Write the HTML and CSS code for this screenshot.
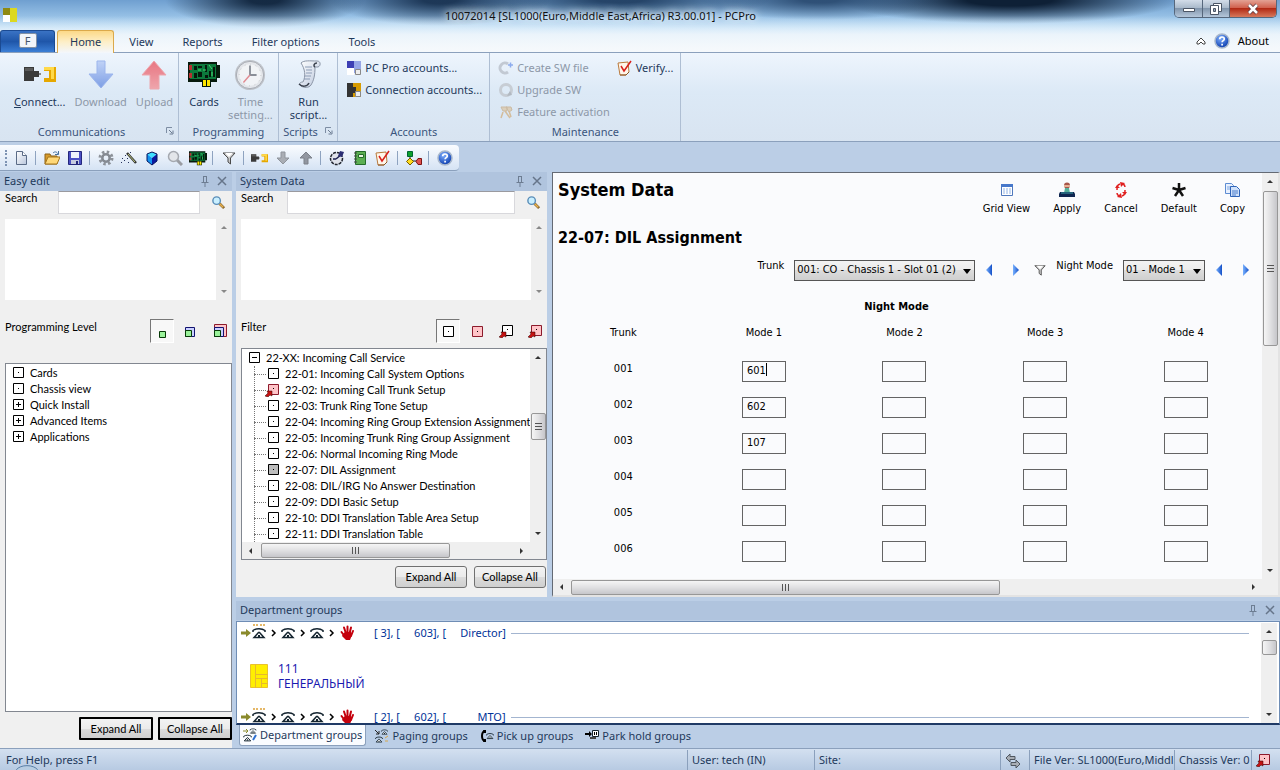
FILE: index.html
```
<!DOCTYPE html>
<html lang="en">
<head>
  <meta charset="UTF-8">
  <meta name="viewport" content="width=device-width, initial-scale=1.0">
  <title>10072014 [SL1000(Euro,Middle East,Africa) R3.00.01] - PCPro</title>
  <link rel="stylesheet" href="styles.css">
</head>
<body>

  <!-- shared icons -->
  <svg class="defs" aria-hidden="true">
    <linearGradient id="gBlue" x1="0" y1="0" x2="0" y2="1"><stop offset="0" stop-color="#b9cdf6"/><stop offset="1" stop-color="#6d92e2"/></linearGradient>
    <linearGradient id="gRed" x1="0" y1="0" x2="0" y2="1"><stop offset="0" stop-color="#e8606c"/><stop offset="1" stop-color="#f29aa0"/></linearGradient>
    <linearGradient id="gNav" x1="0" y1="0" x2="1" y2="0"><stop offset="0" stop-color="#79b2ff"/><stop offset="1" stop-color="#1450c8"/></linearGradient>
    <linearGradient id="gPaper" x1="0" y1="0" x2="1" y2="1"><stop offset="0" stop-color="#ffffff"/><stop offset="1" stop-color="#b9c6dc"/></linearGradient>
    <radialGradient id="gHelp" cx="0.4" cy="0.3" r="0.7"><stop offset="0" stop-color="#7fb0ff"/><stop offset="1" stop-color="#0b3cae"/></radialGradient>
    <symbol id="plug" viewBox="0 0 32 16">
      <path d="M0 1h10v4h5v6h-5v4H0z" fill="#3a3a3a"/><path d="M1 2h8v3H1z" fill="#5a5a5a"/><path d="M15 7h2v2h-2z" fill="#888"/>
      <path d="M20 1h12v15H20v-4h5V5h-5z" fill="#e6a800"/><path d="M20 1h10v3H20zM27 4h3v9h-3z" fill="#ffd94a"/>
    </symbol>
    <symbol id="board" viewBox="0 0 32 28">
      <path d="M0 2h29v3h3v13h-3v4h-6v5h-9v-5H0z" fill="#061a0c"/>
      <path d="M2 4h26v15H2z" fill="#0c7a3c"/>
      <path d="M1 5h3v5H1zM1 13h3v5H1z" fill="#b83232"/>
      <path d="M6 6h3v4H6zM10 6h4v2h-4zM10 12h4v5h-4zM6 13h3v5H6zM17 5h2v7h-2zM17 15h3v3h-3zM25 7h2v10h-2zM21 11h2v6h-2z" fill="#04190b"/>
      <path d="M21 5l3 4M15 10h3M24 12v4M10 10h3" stroke="#43d870" stroke-width="1"/>
      <path d="M15 20h3v6h-3zM19 20h3v6h-3z" fill="#ffe600"/>
    </symbol>
    <symbol id="verify" viewBox="0 0 16 16">
      <path d="M1 3l10-1 1 10-3 3H3z" fill="#fff6ea" stroke="#b9793c"/>
      <path d="M3 15h6l3-3" fill="none" stroke="#8a5524"/>
      <path d="M4 6l3 5 7-10" fill="none" stroke="#d8201c" stroke-width="1.5"/>
    </symbol>
    <symbol id="help" viewBox="0 0 16 16">
      <circle cx="8" cy="8" r="7" fill="url(#gHelp)" stroke="#a9b8cc" stroke-width="1.5"/>
      <path d="M5.700 6.300c0-3 4.600-3 4.600-.3 0 1.700-2.200 1.600-2.200 3.200M8.100 10.800v1.700" fill="none" stroke="#fff" stroke-width="1.700"/>
    </symbol>
    <symbol id="funnel" viewBox="0 0 14 14">
      <path d="M1 2h12L8.500 7v6L6 11V7z" fill="#c9c9c9" stroke="#4a4a4a"/><path d="M3 2h8L7 6z" fill="#fff"/>
    </symbol>
    <symbol id="lens" viewBox="0 0 16 16">
      <path d="M9 9l5 5" stroke="#8b6a35" stroke-width="3"/><path d="M9 9l4 4" stroke="#e9b24b" stroke-width="1.500"/>
      <circle cx="6" cy="6" r="4" fill="#c9efff" stroke="#5a8db8" stroke-width="1.500"/>
    </symbol>
    <symbol id="pin" viewBox="0 0 10 12"><path d="M3 1.500h4M3.500 1v6M6.500 1v6M1.500 7.500h7M5 8v4" fill="none" stroke="#6d7d92"/></symbol>
    <symbol id="cross" viewBox="0 0 10 10"><path d="M1 1l8 8M9 1l-8 8" stroke="#66758a" stroke-width="1.500"/></symbol>
    <symbol id="launcher" viewBox="0 0 8 8"><path d="M.5 6V.5H6" fill="none" stroke="#7d8da3"/><path d="M3 3l3 3M7 3.500V7H3.500" fill="none" stroke="#6b7b91"/></symbol>
    <symbol id="box" viewBox="0 0 12 12"><path d="M1.500 1.500h10v10h-10z" fill="#fff" stroke="#000"/><path d="M6 6h1v1H6z"/></symbol>
    <symbol id="boxplus" viewBox="0 0 12 12"><path d="M1.500 1.500h10v10h-10z" fill="#fff" stroke="#000"/><path d="M4 6.500h5M6.500 4v5" stroke="#000"/></symbol>
    <symbol id="boxminus" viewBox="0 0 12 12"><path d="M1.500 1.500h10v10h-10z" fill="#fff" stroke="#000"/><path d="M4 6.500h5" stroke="#000"/></symbol>
    <symbol id="boxgray" viewBox="0 0 12 12"><path d="M1.500 1.500h10v10h-10z" fill="#bdbdbd" stroke="#000"/><path d="M6 6h1v1H6z"/></symbol>
    <symbol id="boxpink" viewBox="0 0 12 12"><path d="M1.500 1.500h10v10h-10z" fill="#ffc4c8" stroke="#8c1a2b"/><path d="M6 6h1v1H6z"/></symbol>
    <symbol id="boxlink" viewBox="0 0 14 14"><path d="M3.500 1.500h10v10h-10z" fill="#fff" stroke="#000"/><path d="M8 5h1v1H8z"/><path d="M2 8h5v5l-2-1-2 2-3-1 3-3z" fill="#c41212" stroke="#300" stroke-width=".5"/></symbol>
    <symbol id="boxpinklink" viewBox="0 0 14 14"><path d="M3.500 1.500h10v10h-10z" fill="#ffc4c8" stroke="#8c1a2b"/><path d="M8 5h1v1H8z"/><path d="M2 8h5v5l-2-1-2 2-3-1 3-3z" fill="#c41212" stroke="#300" stroke-width=".5"/></symbol>
    <symbol id="phone" viewBox="0 0 14 12">
      <path d="M1 5V3.500c3-2.500 9-2.500 12 0V5" fill="none" stroke="#14242f" stroke-width="1.500"/>
      <path d="M6.500 5.500h1l4.500 5H2z" fill="#fff" stroke="#14242f" stroke-width="1.500"/><path d="M6 8h2v2H6z" fill="#14242f"/>
    </symbol>
    <symbol id="next" viewBox="0 0 7 8"><path d="M2 1l3 3-3 3" fill="none" stroke="#000" stroke-width="1.500"/></symbol>
    <symbol id="into" viewBox="0 0 10 8"><path d="M0 2.500h5V0l5 4-5 4V5.500H0z" fill="#8a8a2c"/></symbol>
    <symbol id="hand" viewBox="0 0 16 16">
      <path d="M2.500 7l3 4M5 2.500l2 6M8.500 1.500v7M12 2.500l-1.500 6M14 6l-2 5" stroke="#c4000c" stroke-width="2" stroke-linecap="round"/><path d="M4 9l2-2h6l1 3-2 5H7l-4-4z" fill="#c4000c"/>
    </symbol>
    <symbol id="prev-arrow" viewBox="0 0 8 12"><path d="M7 0v12L1 6z" fill="url(#gNav)"/></symbol>
    <symbol id="next-arrow" viewBox="0 0 8 12"><path d="M1 0v12l6-6z" fill="url(#gNav)"/></symbol>
  </svg>

  <header class="header">
    <div class="titlebar">
      <svg class="app-icon" viewBox="0 0 14 14"><path d="M0 0h7v7H0z" fill="#8f8a12"/><path d="M7 0h7v14H7z" fill="#dcd820"/><path d="M0 7h7v7H0z" fill="#fff"/></svg>
      <h1 class="app-title">10072014 [SL1000(Euro,Middle East,Africa) R3.00.01] - PCPro</h1>
      <div class="window-buttons">
        <button class="win-btn" aria-label="Minimize"><svg width="14" height="12" viewBox="0 0 14 12"><path d="M1.500 5.500h11v3h-11z" fill="#fff" stroke="#4b5565"/></svg></button>
        <button class="win-btn win-restore" aria-label="Restore"><svg width="12" height="12" viewBox="0 0 12 12"><path d="M3.500.5h8v8h-8z" fill="#fff" stroke="#4b5565"/><path d="M.5 2.500h8v9h-8z" fill="#fff" stroke="#4b5565"/><path d="M3.500 5.500h2v3h-2z" fill="#9aa8ba" stroke="#4b5565"/></svg></button>
        <button class="win-btn win-close" aria-label="Close"><svg width="12" height="12" viewBox="0 0 12 12"><path d="M2 2l8 8M10 2l-8 8" stroke="#5b3a42" stroke-width="4"/><path d="M2 2l8 8M10 2l-8 8" stroke="#fff" stroke-width="2.500"/></svg></button>
      </div>
    </div>
    <nav class="tabs">
      <button class="file-tab"><span class="file-key">F</span></button>
      <button class="tab active">Home</button>
      <button class="tab">View</button>
      <button class="tab">Reports</button>
      <button class="tab">Filter options</button>
      <button class="tab">Tools</button>
      <div class="tabs-right">
        <button class="plain" aria-label="Minimize ribbon"><svg width="10" height="8" viewBox="0 0 10 8"><path d="M1 5l4-4 4 4v2H7L5 5 3 7H1z" fill="#fff" stroke="#444"/></svg></button>
        <svg width="16" height="16"><use href="#help"/></svg>
        <button class="plain about">About</button>
      </div>
    </nav>
  </header>

  <section class="ribbon">
    <div class="group">
      <div class="group-body communications">
        <button class="big"><svg width="32" height="32"><use href="#plug" y="0" width="32" height="30"/></svg><span><u>C</u>onnect...</span></button>
        <button class="big off"><svg width="32" height="32" viewBox="0 0 32 32"><path d="M12 2h8v13h8L16 29 4 15h8z" fill="url(#gBlue)" stroke="#8fabeb"/></svg><span>Download</span></button>
        <button class="big off"><svg width="32" height="32" viewBox="0 0 32 32"><path d="M12 30h9V16h7L16 2 4 16h8z" fill="url(#gRed)" stroke="#ef9aa0"/></svg><span>Upload</span></button>
      </div>
      <div class="group-name">Communications<svg class="launcher"><use href="#launcher"/></svg></div>
    </div>
    <div class="group">
      <div class="group-body programming">
        <button class="big"><svg width="32" height="32" viewBox="0 0 32 32"><use href="#board" width="32" height="30"/></svg><span>Cards</span></button>
        <button class="big off"><svg width="34" height="34" viewBox="0 0 34 34"><circle cx="17" cy="17" r="16" fill="#b9bcc2"/><circle cx="17" cy="17" r="14.500" fill="#e4e5e8" stroke="#9b9ea5"/><circle cx="17" cy="17" r="11.500" fill="#f4f5f6" stroke="#bbb" stroke-dasharray="1 5"/><path d="M17 7v10h7" fill="none" stroke="#7b7f88" stroke-width="2"/><path d="M17 17l-7 8" stroke="#e07a80" stroke-width="1.500"/></svg><span>Time<br>setting...</span></button>
      </div>
      <div class="group-name">Programming</div>
    </div>
    <div class="group">
      <div class="group-body scripts">
        <button class="big"><svg width="32" height="32" viewBox="0 0 32 32"><path d="M8 4c3-3 9-2 16-2 4 0 4 5 1 6h-3c0 8-1 13-4 18-2 3-7 3-10 1-3-3 0-4 2-4 3-6 2-13-2-19z" fill="url(#gPaper)" stroke="#8b95a6"/><path d="M22 8c-2-1-1-4 2-4M6 25c3 3 8 3 10-1" fill="none" stroke="#39404c" stroke-width="1.500"/><path d="M12 8h7M13 11h6M13 14h6M12 17h6M11 20h6" stroke="#8d9db6"/></svg><span>Run<br>script...</span></button>
      </div>
      <div class="group-name">Scripts<svg class="launcher"><use href="#launcher"/></svg></div>
    </div>
    <div class="group">
      <div class="group-body list">
        <button class="row-btn"><svg width="16" height="16" viewBox="0 0 16 16"><path d="M1 1h7v7H1z" fill="#3d3fb4"/><path d="M8 1h7v12H8z" fill="#96a6e6"/><path d="M1 8h7v7H1z" fill="#fff"/><path d="M9.500 9.500h5v5h-5z" fill="#eee" stroke="#888"/></svg>PC Pro accounts...</button>
        <button class="row-btn"><svg width="16" height="16" viewBox="0 0 16 16"><path d="M1 1h14v14H1z" fill="#d79b00"/><path d="M1 1h6v4h3v6H7v4H1z" fill="#333"/><path d="M9.500 9.500h5v5h-5z" fill="#eee" stroke="#888"/></svg>Connection accounts...</button>
      </div>
      <div class="group-name">Accounts</div>
    </div>
    <div class="group">
      <div class="group-body list">
        <button class="row-btn off"><svg width="16" height="16" viewBox="0 0 16 16"><path d="M10 12a5 5 0 1 1 0-8" fill="none" stroke="#bcc3cd" stroke-width="3"/><path d="M10 5h5M12.500 2.500v5" stroke="#7ea0ec" stroke-width="1.500"/></svg>Create SW file</button>
        <button class="row-btn off"><svg width="16" height="16" viewBox="0 0 16 16"><circle cx="8" cy="8" r="5.500" fill="none" stroke="#c3c8cf" stroke-width="3"/><path d="M9 14l5-1-2-4z" fill="#aab0b8"/></svg>Upgrade SW</button>
        <button class="row-btn off"><svg width="16" height="16" viewBox="0 0 16 16"><path d="M3 3h6v4H5zM8 3h5l1 3-3 2z" fill="#dccbb2" stroke="#c9b496"/><path d="M7 7l5 7M5 8l-2 6M11 7l2 6" stroke="#d3b68d" stroke-width="1.500"/></svg>Feature activation</button>
        <button class="row-btn"><svg width="16" height="16"><use href="#verify"/></svg>Verify...</button>
      </div>
      <div class="group-name">Maintenance</div>
    </div>
  </section>

  <div class="toolbar-row">
    <div class="toolbar">
      <i class="grip"></i>
      <button class="tool" aria-label="New"><svg width="16" height="16" viewBox="0 0 16 16"><path d="M3.500 1.500h6l4 4v9h-10z" fill="url(#gPaper)" stroke="#5a6b86"/><path d="M9.500 1.500v4h4" fill="#fff" stroke="#5a6b86"/></svg></button>
      <i class="sep"></i>
      <button class="tool" aria-label="Open"><svg width="16" height="16" viewBox="0 0 16 16"><path d="M1 14V4h5l1 2h6v8z" fill="#d79a2b" stroke="#8c6114"/><path d="M1 14l3-7h12l-3 7z" fill="#ffd878" stroke="#a5761c"/><path d="M9 3c2-2 4-1 5 1M14.500 1v3.500H11" fill="none" stroke="#47729f"/></svg></button>
      <button class="tool" aria-label="Save"><svg width="16" height="16" viewBox="0 0 16 16"><path d="M1.500 1.500h13v13h-13z" fill="#4a4fc4" stroke="#24277c"/><path d="M4 2h8v6H4z" fill="#eef2fb"/><path d="M4 10h8v4H4z" fill="#c6cce0"/><path d="M9 11h2v3H9z" fill="#24277c"/></svg></button>
      <i class="sep"></i>
      <button class="tool" aria-label="Settings"><svg width="16" height="16" viewBox="0 0 16 16"><circle cx="8" cy="8" r="6" fill="none" stroke="#8d9299" stroke-width="3" stroke-dasharray="2.400 2.312"/><circle cx="8" cy="8" r="3.700" fill="none" stroke="#858a92" stroke-width="2.500"/></svg></button>
      <button class="tool" aria-label="Wizard"><svg width="16" height="16" viewBox="0 0 16 16"><path d="M6 3l9 10" stroke="#333" stroke-width="2.500"/><path d="M7 4l7 8" stroke="#b9c37a"/><path d="M4 5h1v1H4zM1 8h1v1H1zM6 8h1v1H6zM3 10h1v1H3zM7 12h1v1H7zM0 12h1v1H0zM9 2h1v1H9z" fill="#26335e"/></svg></button>
      <button class="tool" aria-label="Chassis"><svg width="16" height="16" viewBox="0 0 16 16"><path d="M8 2l5 2-5 4-5-4z" fill="#3fe0ff"/><path d="M3 4l5 4v7l-5-4z" fill="#1393f0"/><path d="M13 4L8 8v7l5-4z" fill="#0a18a0"/><path d="M8 2l5 2v7l-5 4-5-4V4z" fill="none" stroke="#04125e"/></svg></button>
      <button class="tool" aria-label="Find"><svg width="16" height="16" viewBox="0 0 16 16"><path d="M10 10l5 5" stroke="#9a9da3" stroke-width="3"/><circle cx="6.500" cy="6.500" r="5" fill="#e3e6ea" stroke="#a5a9b0" stroke-width="1.500"/></svg></button>
      <button class="tool" aria-label="Cards"><svg width="18" height="16"><use href="#board"/></svg></button>
      <i class="sep"></i>
      <button class="tool" aria-label="Filter"><svg width="14" height="14"><use href="#funnel"/></svg></button>
      <i class="sep"></i>
      <button class="tool" aria-label="Connect"><svg width="17" height="10"><use href="#plug"/></svg></button>
      <button class="tool" aria-label="Download"><svg width="14" height="14" viewBox="0 0 14 14"><path d="M5 1h4v6h4l-6 6-6-6h4z" fill="#a9adb4" stroke="#8f949c"/></svg></button>
      <button class="tool" aria-label="Upload"><svg width="14" height="14" viewBox="0 0 14 14"><path d="M5 13h4V7h4L7 1 1 7h4z" fill="#9196a0" stroke="#7c818a"/></svg></button>
      <i class="sep"></i>
      <button class="tool" aria-label="Time setting"><svg width="16" height="16" viewBox="0 0 16 16"><circle cx="7.500" cy="8.500" r="6" fill="#dfe2ea" stroke="#20242e" stroke-width="1.500" stroke-dasharray="3 1"/><path d="M7 9l6-5M7 9H4" stroke="#191d4e" stroke-width="1.500"/><path d="M9 6l2-5 4 1-2 5z" fill="#2c2f74"/></svg></button>
      <button class="tool" aria-label="Notes"><svg width="16" height="16" viewBox="0 0 16 16"><path d="M3.500 1.500h10v13h-10z" fill="#5caf52" stroke="#256b2a"/><path d="M6.500 4.500h5v3h-5z" fill="#e7f6df" stroke="#256b2a"/><path d="M2 3h3M2 6h3M2 9h3M2 12h3" stroke="#444"/></svg></button>
      <button class="tool" aria-label="Verify"><svg width="16" height="16"><use href="#verify"/></svg></button>
      <i class="sep"></i>
      <button class="tool" aria-label="Flow"><svg width="16" height="16" viewBox="0 0 16 16"><path d="M4 6v5h8" fill="none" stroke="#222"/><path d="M1.500 1.500h5v5h-5z" fill="#0fa12c" stroke="#063"/><path d="M4 8l3.500 3.500L4 15 .5 11.500z" fill="#ffdc1e" stroke="#765c00"/><path d="M10 11.500l2-3h3.500v6H12z" fill="#e2514d" stroke="#7b1413"/></svg></button>
      <i class="sep"></i>
      <button class="tool" aria-label="Help"><svg width="16" height="16"><use href="#help"/></svg></button>
    </div>
  </div>

  <main class="workspace">
    <section class="dock easy-edit">
      <div class="dock-title">Easy edit<span class="dock-icons"><svg width="10" height="12"><use href="#pin"/></svg><svg width="10" height="10"><use href="#cross"/></svg></span></div>
      <div class="dock-body">
        <div class="search">
          <label for="easySearch">Search</label>
          <input type="text" id="easySearch">
          <button class="plain" aria-label="Search"><svg width="15" height="15"><use href="#lens"/></svg></button>
        </div>
        <div class="results"><div class="results-list"></div><div class="vscroll faded"><i class="up"></i><i class="down"></i></div></div>
        <div class="options">
          <span>Programming Level</span>
          <button class="option pressed" aria-label="Basic"><svg width="24" height="24" viewBox="0 0 24 24"><path d="M9.500 12.500h6v6h-6z" fill="#9af29a" stroke="#063a06"/></svg></button>
          <button class="option" aria-label="Standard"><svg width="24" height="24" viewBox="0 0 24 24"><path d="M6.500 8.500h9v9h-9z" fill="#c9d0ff" stroke="#121270"/><path d="M6.500 11.500h6v6h-6z" fill="#9af29a" stroke="#063a06"/></svg></button>
          <button class="option" aria-label="Advanced"><svg width="24" height="24" viewBox="0 0 24 24"><path d="M6.500 5.500h12v12h-12z" fill="#ffc4c8" stroke="#8c1a2b"/><path d="M6.500 8.500h9v9h-9z" fill="#c9d0ff" stroke="#121270"/><path d="M6.500 11.500h6v6h-6z" fill="#9af29a" stroke="#063a06"/></svg></button>
        </div>
        <ul class="tree easy-tree">
          <li><svg class="node"><use href="#box"/></svg>Cards</li>
          <li><svg class="node"><use href="#box"/></svg>Chassis view</li>
          <li><svg class="node"><use href="#boxplus"/></svg>Quick Install</li>
          <li><svg class="node"><use href="#boxplus"/></svg>Advanced Items</li>
          <li><svg class="node"><use href="#boxplus"/></svg>Applications</li>
        </ul>
        <div class="dock-buttons heavy"><button class="btn">Expand All</button><button class="btn">Collapse All</button></div>
      </div>
    </section>

    <div class="right-side">
      <div class="upper">
        <section class="dock system-data">
          <div class="dock-title">System Data<span class="dock-icons"><svg width="10" height="12"><use href="#pin"/></svg><svg width="10" height="10"><use href="#cross"/></svg></span></div>
          <div class="dock-body">
            <div class="search">
              <label for="sysSearch">Search</label>
              <input type="text" id="sysSearch">
              <button class="plain" aria-label="Search"><svg width="15" height="15"><use href="#lens"/></svg></button>
            </div>
            <div class="results"><div class="results-list"></div><div class="vscroll faded"><i class="up"></i><i class="down"></i></div></div>
            <div class="options">
              <span>Filter</span>
              <button class="option pressed" aria-label="All"><svg width="12" height="12"><use href="#box"/></svg></button>
              <button class="option" aria-label="Changed"><svg width="12" height="12"><use href="#boxpink"/></svg></button>
              <button class="option" aria-label="Linked"><svg width="14" height="14"><use href="#boxlink"/></svg></button>
              <button class="option" aria-label="Changed and linked"><svg width="14" height="14"><use href="#boxpinklink"/></svg></button>
            </div>
            <div class="tree-frame">
              <ul class="tree">
                <li><svg class="node"><use href="#boxminus"/></svg>22-XX: Incoming Call Service
                  <ul class="children">
                    <li><svg class="node"><use href="#box"/></svg>22-01: Incoming Call System Options</li>
                    <li><svg class="node link"><use href="#boxpinklink"/></svg>22-02: Incoming Call Trunk Setup</li>
                    <li><svg class="node"><use href="#box"/></svg>22-03: Trunk Ring Tone Setup</li>
                    <li><svg class="node"><use href="#box"/></svg>22-04: Incoming Ring Group Extension Assignment</li>
                    <li><svg class="node"><use href="#box"/></svg>22-05: Incoming Trunk Ring Group Assignment</li>
                    <li><svg class="node"><use href="#box"/></svg>22-06: Normal Incoming Ring Mode</li>
                    <li><svg class="node"><use href="#boxgray"/></svg>22-07: DIL Assignment</li>
                    <li><svg class="node"><use href="#box"/></svg>22-08: DIL/IRG No Answer Destination</li>
                    <li><svg class="node"><use href="#box"/></svg>22-09: DDI Basic Setup</li>
                    <li><svg class="node"><use href="#box"/></svg>22-10: DDI Translation Table Area Setup</li>
                    <li><svg class="node"><use href="#box"/></svg>22-11: DDI Translation Table</li>
                  </ul>
                </li>
              </ul>
              <div class="vscroll"><i class="up"></i><div class="track tree-track"><b class="thumb"></b></div><i class="down"></i></div>
              <div class="hscroll"><i class="left"></i><div class="track tree-htrack"><b class="thumb"></b></div><i class="right"></i></div>
              <div class="corner"></div>
            </div>
            <div class="dock-buttons"><button class="btn">Expand All</button><button class="btn">Collapse All</button></div>
          </div>
        </section>

        <section class="document">
          <div class="page">
            <div class="page-head">
              <h2>System Data</h2>
              <div class="actions">
                <button class="action"><svg width="16" height="16" viewBox="0 0 16 16"><path d="M2.500 2.500h11v11h-11z" fill="#fff" stroke="#4f78bd"/><path d="M2 2h12v3H2z" fill="#4778ca"/><path d="M4 7h8M4 9h8M4 11h8" stroke="#8fb2e6" stroke-dasharray="2 1"/></svg>Grid View</button>
                <button class="action"><svg width="16" height="16" viewBox="0 0 16 16"><circle cx="8" cy="3.500" r="3" fill="#a8574a"/><path d="M5 3h6v2H5z" fill="#e6b095"/><path d="M6 6h4l1 5H5z" fill="#56b29c"/><path d="M1 10h14l1 2v3H0v-3z" fill="#0f2650"/><path d="M2 11h12" stroke="#3fa0a8"/></svg>Apply</button>
                <button class="action"><svg width="16" height="16" viewBox="0 0 16 16"><path d="M7 2C4 3 4 5 4 8M9 14c3-1 3-3 3-6M10 2c2 1 2 2 2 3M6 14c-2-1-2-2-2-3" fill="none" stroke="#e02020" stroke-width="1.500"/><path d="M7 0l5 1-4 4zM9 16l-5-1 4-4zM2 6h5L4 3zM14 10H9l3 3z" fill="#e02020"/></svg>Cancel</button>
                <button class="action"><svg width="16" height="16" viewBox="0 0 16 16"><path d="M8 1v7M1.500 6L8 8M14.500 6L8 8M4 14l4-6 4 6" fill="none" stroke="#111" stroke-width="2.500"/></svg>Default</button>
                <button class="action"><svg width="16" height="16" viewBox="0 0 16 16"><path d="M1.500 1.500h6l2 2v8h-8z" fill="#e8f1ff" stroke="#5d8cd2"/><path d="M3 5h5M3 7h5" stroke="#7ea6e0"/><path d="M6.500 4.500h6l3 3v7h-9z" fill="#cfe1fb" stroke="#2f64b8"/><path d="M8 9h6M8 11h6M8 13h4" stroke="#4a7cca"/></svg>Copy</button>
              </div>
            </div>
            <h3>22-07: DIL Assignment</h3>
            <div class="selectors">
              <label for="trunk">Trunk</label>
              <span class="dropdown trunk"><select id="trunk"><option>001: CO - Chassis 1 - Slot 01 (2)</option></select></span>
              <button class="plain" aria-label="Previous trunk"><svg width="8" height="12"><use href="#prev-arrow"/></svg></button>
              <button class="plain next" aria-label="Next trunk"><svg width="8" height="12"><use href="#next-arrow"/></svg></button>
              <button class="plain filter" aria-label="Filter"><svg width="12" height="12"><use href="#funnel"/></svg></button>
              <label for="nightMode">Night Mode</label>
              <span class="dropdown mode"><select id="nightMode"><option>01 - Mode 1</option></select></span>
              <button class="plain" aria-label="Previous mode"><svg width="8" height="12"><use href="#prev-arrow"/></svg></button>
              <button class="plain next" aria-label="Next mode"><svg width="8" height="12"><use href="#next-arrow"/></svg></button>
            </div>
            <table class="grid">
              <caption>Night Mode</caption>
              <thead>
                <tr><th>Trunk</th><th>Mode 1</th><th>Mode 2</th><th>Mode 3</th><th>Mode 4</th></tr>
              </thead>
              <tbody>
                <tr><th>001</th><td><span class="editing"><input type="text" value="601" aria-label="001 Mode 1"></span></td><td><input type="text" aria-label="001 Mode 2"></td><td><input type="text" aria-label="001 Mode 3"></td><td><input type="text" aria-label="001 Mode 4"></td></tr>
                <tr><th>002</th><td><input type="text" value="602" aria-label="002 Mode 1"></td><td><input type="text" aria-label="002 Mode 2"></td><td><input type="text" aria-label="002 Mode 3"></td><td><input type="text" aria-label="002 Mode 4"></td></tr>
                <tr><th>003</th><td><input type="text" value="107" aria-label="003 Mode 1"></td><td><input type="text" aria-label="003 Mode 2"></td><td><input type="text" aria-label="003 Mode 3"></td><td><input type="text" aria-label="003 Mode 4"></td></tr>
                <tr><th>004</th><td><input type="text" aria-label="004 Mode 1"></td><td><input type="text" aria-label="004 Mode 2"></td><td><input type="text" aria-label="004 Mode 3"></td><td><input type="text" aria-label="004 Mode 4"></td></tr>
                <tr><th>005</th><td><input type="text" aria-label="005 Mode 1"></td><td><input type="text" aria-label="005 Mode 2"></td><td><input type="text" aria-label="005 Mode 3"></td><td><input type="text" aria-label="005 Mode 4"></td></tr>
                <tr><th>006</th><td><input type="text" aria-label="006 Mode 1"></td><td><input type="text" aria-label="006 Mode 2"></td><td><input type="text" aria-label="006 Mode 3"></td><td><input type="text" aria-label="006 Mode 4"></td></tr>
              </tbody>
            </table>
          </div>
          <div class="vscroll"><i class="up"></i><div class="track page-track"><b class="thumb"></b></div><i class="down"></i></div>
          <div class="hscroll"><i class="left"></i><div class="track page-htrack"><b class="thumb"></b></div><i class="right"></i></div>
        </section>
      </div>

      <section class="departments">
        <div class="dock-title">Department groups<span class="dock-icons"><svg width="10" height="12"><use href="#pin"/></svg><svg width="10" height="10"><use href="#cross"/></svg></span></div>
        <div class="dept-frame">
          <div class="dept-list">
            <div class="dept-head">
              <span class="chain"><svg width="10" height="8"><use href="#into"/></svg><span class="ringing"><svg width="14" height="12"><use href="#phone"/></svg></span><svg width="7" height="8"><use href="#next"/></svg><svg width="14" height="12"><use href="#phone"/></svg><svg width="7" height="8"><use href="#next"/></svg><svg width="14" height="12"><use href="#phone"/></svg><svg width="7" height="8"><use href="#next"/></svg><svg width="16" height="16"><use href="#hand"/></svg></span>
              <span class="dept-text">[ 3], [     603], [     Director]</span>
            </div>
            <div class="member">
              <svg width="20" height="26" viewBox="0 0 20 26"><path d="M1.500 1.500h17v23h-17z" fill="#ffee00" stroke="#e9c22c"/><path d="M6.500 1.500v23M6.500 11.500h12M6.500 15.500h12M12.500 15.500v9M12.500 20.500h6" stroke="#e6b830"/></svg>
              <div>111<br>ГЕНЕРАЛЬНЫЙ</div>
            </div>
            <div class="dept-head">
              <span class="chain"><svg width="10" height="8"><use href="#into"/></svg><span class="ringing"><svg width="14" height="12"><use href="#phone"/></svg></span><svg width="7" height="8"><use href="#next"/></svg><svg width="14" height="12"><use href="#phone"/></svg><svg width="7" height="8"><use href="#next"/></svg><svg width="14" height="12"><use href="#phone"/></svg><svg width="7" height="8"><use href="#next"/></svg><svg width="16" height="16"><use href="#hand"/></svg></span>
              <span class="dept-text">[ 2], [     602], [           MTO]</span>
            </div>
          </div>
          <div class="vscroll"><i class="up"></i><div class="track dept-track"><b class="thumb"></b></div><i class="down"></i></div>
        </div>
        <nav class="dept-tabs">
          <button class="dept-tab active"><svg width="14" height="14" viewBox="0 0 14 14"><use href="#phone" x="6" y="0" width="8" height="6"/><use href="#phone" x="0" y="6" width="9" height="8"/><path d="M0 3h5M3 1l2 2-2 2" stroke="#8a8a2c" fill="none"/><path d="M13 7l-3 5" stroke="#2d6fd0" stroke-width="2"/></svg>Department groups</button>
          <button class="dept-tab"><svg width="14" height="14" viewBox="0 0 14 14"><use href="#phone" x="6" y="0" width="7" height="6"/><use href="#phone" x="0" y="7" width="8" height="7"/><path d="M0 1l4 4M1 5h3V2" stroke="#222" fill="none"/><path d="M10 9l3-2M10 12h3" stroke="#d9a84a"/></svg>Paging groups</button>
          <button class="dept-tab"><svg width="14" height="14" viewBox="0 0 14 14"><path d="M5 2C1 3 1 11 5 12" fill="none" stroke="#000" stroke-width="2"/><path d="M3 1h3v3H4zM4 10h2v3H3z" fill="#000"/><use href="#phone" x="6" y="3" width="8" height="8"/></svg>Pick up groups</button>
          <button class="dept-tab"><svg width="14" height="14" viewBox="0 0 14 14"><path d="M0 4h4V2l3 3-3 3V6H0z" fill="#000"/><path d="M7.500 1.500h6v6h-6z" fill="#fff" stroke="#14242f"/><path d="M9 3h1v3H9zM11 3h1v3h-1z"/><path d="M5 8h6v2H5z" fill="#444"/></svg>Park hold groups</button>
        </nav>
      </section>
    </div>
  </main>

  <footer class="status">
    <span class="help-text">For Help, press F1</span>
    <span class="user">User: tech (IN)</span>
    <span class="site">Site:</span>
    <span class="sync"><svg width="16" height="16" viewBox="0 0 16 16"><path d="M1 5l4-4v2.500h5v3H5V9z" fill="#a9aeb5" stroke="#4f565f"/><path d="M15 11l-4-4v2.500H6v3h5V15z" fill="#a9aeb5" stroke="#4f565f"/></svg></span>
    <span class="file-ver">File Ver: SL1000(Euro,Middl</span>
    <span class="chassis-ver">Chassis Ver: 0</span>
    <span class="state"><svg width="14" height="14"><use href="#boxpinklink"/></svg></span>
    <svg class="orb" viewBox="0 0 28 6"><path d="M1 6C6-1 22-1 27 6" fill="#b7cde2" stroke="#46709a"/></svg>
  </footer>

</body>
</html>
```
FILE: styles.css
```
* {
  box-sizing: border-box;
}

body {
  margin: 0;
  min-height: 100vh;
  display: flex;
  flex-direction: column;
  overflow: hidden;
  background: #bbcee6;
  color: #1e395b;
  font: 11px/14px "Noto Sans", sans-serif;
}

button {
  font: inherit;
  color: inherit;
  padding: 0;
  border: none;
  background: none;
}

svg {
  display: block;
  flex: none;
}

ul {
  list-style: none;
  margin: 0;
  padding: 0;
}

.defs {
  position: absolute;
  width: 0;
  height: 0;
}

.plain {
  display: flex;
  align-items: center;
}

/* title bar and tabs */
.header {
  background:
    linear-gradient(to bottom, rgba(246, 249, 252, 0) 30%, rgba(246, 249, 252, 0.8) 65%, #f6f9fc 100%),
    radial-gradient(ellipse 100px 28px at 265px 0, rgba(16, 36, 60, 0.95) 15%, rgba(16, 36, 60, 0) 100%),
    radial-gradient(ellipse 110px 26px at 440px 0, rgba(20, 44, 74, 0.9) 15%, rgba(20, 44, 74, 0) 100%),
    radial-gradient(ellipse 150px 20px at 620px 0, rgba(24, 52, 86, 0.85) 15%, rgba(24, 52, 86, 0) 100%),
    radial-gradient(ellipse 120px 20px at 820px 0, rgba(30, 60, 96, 0.8) 15%, rgba(30, 60, 96, 0) 100%),
    radial-gradient(ellipse 170px 24px at 1010px 0, rgba(14, 32, 54, 1) 25%, rgba(14, 32, 54, 0) 100%),
    linear-gradient(to bottom, #6f9fd0, #b4daf6 55%, #d8ecfa);
}

.titlebar {
  display: flex;
  align-items: flex-start;
  height: 30px;
  padding: 0 3px;
}

.app-icon {
  width: 14px;
  height: 14px;
  margin-top: 8px;
}

.app-title {
  flex: 1;
  margin: 8px 0 0;
  padding-left: 10px;
  color: #111;
  font-size: 11px;
  font-weight: normal;
  line-height: 15px;
  text-align: center;
  text-shadow: 0 0 6px #fff, 0 0 8px #dcecf9, 0 0 12px #dcecf9;
}

.window-buttons {
  display: flex;
  height: 18px;
  border: 1px solid #56677c;
  border-top: none;
  border-radius: 0 0 5px 5px;
  overflow: hidden;
}

.win-btn {
  display: flex;
  align-items: center;
  justify-content: center;
  width: 28px;
  background: linear-gradient(to bottom, #d3dde9, #a6b6c8 50%, #8296ad 50%, #b4c6da);
  border-right: 1px solid #56677c;
}

.win-restore {
  width: 27px;
}

.win-close {
  width: 46px;
  border-right: none;
  background: linear-gradient(to bottom, #e3a294, #cf5a46 50%, #b22a15 50%, #d8795c);
}

.tabs {
  display: flex;
  align-items: stretch;
  gap: 1px;
  height: 23px;
  border-bottom: 1px solid #8ba0bc;
}

.file-tab {
  width: 55px;
  margin-right: 1px;
  border: 1px solid #1b4a92;
  border-bottom: none;
  border-radius: 3px 3px 0 0;
  background: linear-gradient(to bottom, #3a73c4, #1f56a9 50%, #3c7fd6);
  display: flex;
  justify-content: center;
  padding-top: 2px;
}

.file-key {
  width: 18px;
  height: 15px;
  line-height: 14px;
  border-radius: 2px;
  background: #f2f5fa;
  border: 1px solid #8190a5;
  color: #47566c;
}

.tab {
  padding: 1px 14px 0;
}

.tab.active {
  margin-bottom: -1px;
  border: 1px solid #dba94b;
  border-bottom: none;
  border-radius: 3px 3px 0 0;
  padding: 0 12px;
  background: linear-gradient(to bottom, #fcd988, #fdefc8 50%, #f3f7fd);
}

.tabs-right {
  display: flex;
  align-items: center;
  gap: 8px;
  margin-left: auto;
  padding-right: 11px;
}

.about {
  color: #000;
}

/* ribbon */
.ribbon {
  display: flex;
  height: 89px;
  background: linear-gradient(to bottom, #eef5fd, #dce9f6 45%, #d8e4f1);
  border-bottom: 1px solid #8ba0bc;
}

.group {
  display: flex;
  flex-direction: column;
  border-right: 1px solid #aebed3;
}

.group-body {
  flex: 1;
  display: flex;
  justify-content: center;
  padding-top: 6px;
}

.big {
  display: flex;
  flex-direction: column;
  align-items: center;
  gap: 4px;
  height: 63px;
  line-height: 13px;
}

.big svg {
  height: 32px;
}

.communications {
  padding-left: 14px;
  padding-right: 5px;
  gap: 9px;
}

.programming {
  padding: 6px 5px 0 9px;
  gap: 8px;
}

.scripts {
  padding: 6px 10px 0 11px;
}

.off {
  color: #8d98a8;
}

.off svg {
  opacity: 0.85;
}

.list {
  display: grid;
  grid-template-rows: repeat(3, 22px);
  grid-auto-flow: column;
  justify-content: start;
  column-gap: 7px;
  padding: 4px 7px 0 8px;
}

.row-btn {
  display: flex;
  align-items: center;
  gap: 3px;
}

.group-name {
  display: flex;
  align-items: center;
  justify-content: center;
  position: relative;
  height: 18px;
  padding-bottom: 1px;
  color: #3b557d;
}

.launcher {
  position: absolute;
  right: 4px;
  top: 4px;
  width: 8px;
  height: 8px;
}

.communications + .group-name,
.scripts + .group-name {
  padding-right: 15px;
}

/* quick toolbar */
.toolbar-row {
  display: flex;
  padding: 3px 0 1px;
}

.toolbar {
  display: flex;
  align-items: center;
  height: 26px;
  padding: 0 3px 0 5px;
  border-radius: 0 4px 4px 0;
  background: linear-gradient(to bottom, #fafcff, #d5e3f4);
  border-bottom: 1px solid #8ba0bc;
}

.grip {
  width: 4px;
  height: 16px;
  border-left: 2px dotted #7d93b3;
}

.tool {
  width: 23px;
  height: 22px;
  display: flex;
  align-items: center;
  justify-content: center;
}

.sep {
  width: 1px;
  height: 14px;
  margin: 0 4px 0 3px;
  background: #8ea3c0;
}

/* docks */
.workspace {
  flex: 1;
  display: flex;
  gap: 4px;
}

.dock {
  display: flex;
  flex-direction: column;
  color: #000;
  background: #f0f0f0;
  font-family: Lato, "Liberation Sans", sans-serif;
}

.easy-edit {
  width: 232px;
}

.system-data {
  width: 311px;
}

.right-side {
  flex: 1;
  min-width: 0;
  display: flex;
  flex-direction: column;
  gap: 4px;
}

.upper {
  flex: 1;
  display: flex;
  gap: 5px;
}

.dock-title {
  display: flex;
  align-items: center;
  justify-content: space-between;
  height: 19px;
  padding: 0 5px 1px 4px;
  background: #b0c4de;
  color: #1e395b;
  font-family: "Noto Sans", sans-serif;
}

.dock-icons {
  display: flex;
  align-items: center;
  gap: 7px;
}

.dock-body {
  flex: 1;
  display: flex;
  flex-direction: column;
  padding-left: 5px;
}

.search {
  display: flex;
  height: 28px;
}

.search label {
  width: 53px;
}

.system-data .search label {
  width: 46px;
}

.search input {
  flex: 1;
  min-width: 0;
  height: 23px;
  border: 1px solid #d8d8dc;
  border-top-color: #9a9a9f;
}

.search button {
  width: 32px;
  height: 23px;
  justify-content: center;
  padding-left: 4px;
}

.results {
  display: flex;
  height: 81px;
}

.results-list {
  flex: 1;
  background: #fff;
}

.options {
  display: flex;
  align-items: center;
  gap: 5px;
  height: 62px;
}

.options span {
  flex: 1;
  padding-bottom: 8px;
}

.option {
  display: flex;
  align-items: center;
  justify-content: center;
  width: 24px;
  height: 24px;
}

.option.pressed {
  border: 1px solid #fff;
  border-top-color: #777;
  border-left-color: #777;
  background: #f8f8f8;
}

.tree {
  line-height: 16px;
}

.tree li {
  position: relative;
  padding-left: 24px;
  white-space: nowrap;
}

.node {
  position: absolute;
  left: 6px;
  top: 1px;
  width: 12px;
  height: 12px;
}

.node.link {
  left: 4px;
  width: 14px;
  height: 14px;
}

.easy-tree {
  flex: 1;
  margin-top: 1px;
  padding-top: 1px;
  background: #fff;
  border: 1px solid #828790;
}

.tree-frame {
  display: grid;
  grid-template-columns: 1fr 16px;
  grid-template-rows: 193px 17px;
  margin-top: -14px;
  background: #fff;
  border: 1px solid #828790;
}

.tree-frame .tree {
  overflow: hidden;
  padding-top: 1px;
}

.corner {
  background: #efefef;
}

.children {
  position: relative;
  margin-left: -5px;
}

.children::before {
  content: "";
  position: absolute;
  left: -7px;
  top: 0;
  height: 100%;
  border-left: 1px dotted #777;
}

.children li::before {
  content: "";
  position: absolute;
  left: -7px;
  top: 8px;
  width: 12px;
  border-top: 1px dotted #777;
}

.dock-buttons {
  display: flex;
  justify-content: flex-end;
  gap: 7px;
  padding: 6px 1px 9px 0;
}

.btn {
  width: 72px;
  height: 22px;
  color: #000;
  border: 1px solid #707070;
  border-radius: 3px;
  background: linear-gradient(to bottom, #f3f3f3, #ebebeb 50%, #dcdcdc 50%, #cfcfcf);
}

.heavy {
  gap: 5px;
  padding: 5px 0 8px;
}

.heavy .btn {
  width: 74px;
  height: 23px;
  border: 2px solid #000;
  border-radius: 1px;
}

/* scroll bars */
.vscroll,
.hscroll {
  display: flex;
  align-items: center;
  justify-content: space-between;
  background: #efefef;
}

.vscroll {
  flex-direction: column;
  width: 16px;
  padding: 7px 0;
}

.hscroll {
  height: 16px;
  padding: 0 7px;
}

.up,
.down,
.left,
.right {
  border: 3px solid transparent;
}

.up {
  border-top: none;
  border-bottom-color: #333;
}

.down {
  border-bottom: none;
  border-top-color: #333;
}

.left {
  border-left: none;
  border-right-color: #333;
}

.right {
  border-right: none;
  border-left-color: #333;
}

.faded .up {
  border-bottom-color: #888;
}

.faded .down {
  border-top-color: #888;
}

.track {
  flex: 1;
  display: flex;
}

.vscroll .track {
  flex-direction: column;
}

.thumb {
  display: block;
  border: 1px solid #979797;
  border-radius: 2px;
}

.vscroll .thumb {
  width: 15px;
  background: repeating-linear-gradient(to bottom, #555 0 1px, transparent 1px 3px) center / 7px 7px no-repeat, linear-gradient(to right, #f5f5f5, #e0e0e2 50%, #c6c6ca);
}

.hscroll .thumb {
  height: 15px;
  background: repeating-linear-gradient(to right, #555 0 1px, transparent 1px 3px) center / 7px 7px no-repeat, linear-gradient(to bottom, #f5f5f5, #e0e0e2 50%, #c6c6ca);
}

.tree-track {
  padding-top: 54px;
}

.tree-track .thumb {
  height: 27px;
}

.tree-htrack {
  padding: 0 70px 0 9px;
}

.tree-htrack .thumb {
  width: 100%;
}

.tree-frame .hscroll {
  height: 17px;
}

.page-track {
  padding-top: 8px;
}

.page-track .thumb {
  height: 155px;
}

.page-htrack {
  padding-left: 8px;
}

.page-htrack .thumb {
  width: 63%;
}

.dept-track {
  padding-top: 7px;
}

.dept-track .thumb {
  height: 15px;
  background: linear-gradient(to right, #f5f5f5, #e0e0e2 50%, #c6c6ca);
}

/* document */
.document {
  flex: 1;
  min-width: 0;
  display: grid;
  grid-template-columns: 1fr 16px;
  grid-template-rows: 1fr 16px;
  border: 1px solid #646a74;
  border-right: 2px solid #e3e3e3;
  border-bottom: 2px solid #e3e3e3;
  background: #efefef;
  color: #000;
  font-family: "DejaVu Sans Condensed", "DejaVu Sans", sans-serif;
}

.page {
  min-width: 0;
  overflow: hidden;
  background: #fafbfd;
}

.page-head {
  display: flex;
  justify-content: space-between;
  padding: 7px 17px 0 5px;
}

h2,
h3 {
  margin: 0;
  font-weight: bold;
}

h2 {
  font-size: 18px;
  line-height: 20px;
}

h3 {
  padding: 13px 5px 0;
  font-size: 16px;
  line-height: 18px;
}

.actions {
  display: flex;
  gap: 23px;
}

.action {
  display: flex;
  flex-direction: column;
  align-items: center;
  gap: 4px;
  padding-top: 2px;
}

.selectors {
  display: flex;
  justify-content: flex-end;
  align-items: center;
  height: 22px;
  margin-top: 12px;
  padding-right: 12px;
  gap: 10px;
}

.selectors label {
  align-self: flex-start;
}

.selectors .next {
  margin-left: 9px;
}

.selectors .filter {
  margin-left: 4px;
}

.dropdown {
  position: relative;
}

.dropdown::after {
  content: "";
  position: absolute;
  right: 4px;
  top: 9px;
  border: 4px solid transparent;
  border-top: 5px solid #000;
  border-bottom: none;
}

.trunk {
  width: 181px;
}

.mode {
  width: 82px;
}

select {
  display: block;
  appearance: none;
  width: 100%;
  height: 21px;
  padding: 0 2px;
  border: 1px solid #555;
  border-radius: 0;
  color: #000;
  font: inherit;
  background: linear-gradient(to bottom, #f3f3f3, #ebebeb 50%, #dcdcdc 50%, #cfcfcf);
}

.grid {
  width: calc(100% - 6px);
  margin-top: 19px;
  table-layout: fixed;
  border-collapse: collapse;
}

.grid caption {
  padding-right: 16px;
  font-weight: bold;
}

.grid th {
  padding: 0;
  font-weight: normal;
}

.grid thead th {
  height: 39px;
  padding-bottom: 2px;
}

.grid td {
  padding: 0;
  text-align: center;
}

.grid tbody tr {
  height: 36px;
}

.grid tbody th {
  padding-bottom: 4px;
}

.grid input {
  width: 44px;
  height: 21px;
  padding: 0 4px 2px;
  border: 1px solid #646464;
  background: #fafbfd;
  color: #000;
  font: inherit;
}

.editing {
  position: relative;
}

.editing::after {
  content: "";
  position: absolute;
  left: 24px;
  top: -1px;
  height: 13px;
  border-left: 1px solid #000;
}

/* department groups */
.dept-frame {
  display: flex;
  height: 104px;
  margin-top: 1px;
  padding: 1px 2px 0 1px;
  background: #fff;
  border: 1px solid #6f8db5;
  border-bottom: 2px solid #1f3a66;
}

.dept-list {
  flex: 1;
  overflow: hidden;
  padding: 0 12px 0 3px;
  color: #003399;
}

.dept-head {
  display: flex;
  align-items: center;
  height: 20px;
}

.dept-head::after {
  content: "";
  flex: 1;
  margin-left: 5px;
  border-top: 1px solid #a3b5d0;
}

.chain {
  display: flex;
  align-items: center;
  gap: 4px;
  width: 133px;
}

.chain svg:first-child {
  margin-right: -3px;
}

.ringing {
  position: relative;
}

.chain .ringing svg {
  margin-right: 0;
}

.ringing::before {
  content: "";
  position: absolute;
  left: 1px;
  top: -3px;
  width: 12px;
  border-top: 2px dotted #e5b868;
}

.dept-text {
  white-space: pre;
}

.member {
  display: flex;
  align-items: center;
  gap: 9px;
  height: 64px;
  padding: 2px 0 0 8px;
  color: #1a1ab0;
  font-size: 12px;
  line-height: 15px;
}

.dept-tabs {
  display: flex;
  gap: 6px;
  height: 23px;
  padding: 0 3px 2px;
}

.dept-tab {
  display: flex;
  align-items: center;
  gap: 3px;
  padding: 0 3px;
}

.dept-tab.active {
  background: #fafcff;
  border: 1px solid #8ba0bc;
  border-top: none;
  border-radius: 0 0 3px 3px;
}

/* status bar */
.status {
  position: relative;
  display: flex;
  align-items: center;
  height: 22px;
  border-top: 1px solid #8ba0bc;
  background: linear-gradient(to bottom, #d3e0f0, #b7cae2);
}

.status span {
  padding: 3px 0 3px 4px;
  height: 20px;
  border-left: 1px solid #8ba0bc;
  white-space: nowrap;
}

.status .help-text {
  flex: 1;
  padding-left: 6px;
  border-left: none;
}

.user {
  width: 127px;
}

.site {
  width: 186px;
}

.sync {
  width: 29px;
}

.file-ver {
  width: 145px;
}

.chassis-ver {
  width: 77px;
}

.state {
  width: 29px;
}

.orb {
  position: absolute;
  left: 13px;
  bottom: 0;
  width: 28px;
  height: 5px;
}
```
